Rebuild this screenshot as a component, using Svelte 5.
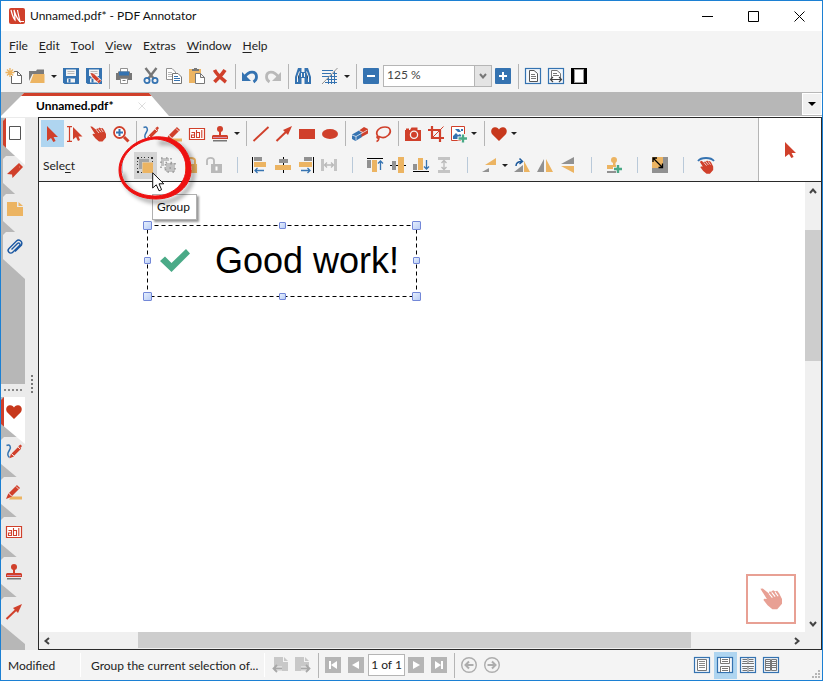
<script>
	const R = '#d0402b', B = '#3573b1', O = '#ecb462', G = '#919191', L = '#b9b9b9';

	const hand = (c, gap) => `<path fill="${c}" d="M.3.6L2 .4 6.500 4 6.800 2.600 8.200 2.800 9.500 1.600 11 2.600 12.500 2 14 4 16 8V11.500L12.500 15.500H9L5.500 12.500 2.500 8.800 3 7.800 5 8z"/><path stroke="${gap}" stroke-width=".8" fill="none" d="M6.500 4L9 7M8.500 3.200L11 6.300M11 3L13.200 6"/>`;
	const viewBox = `<rect x=".5" y=".5" width="15" height="15" fill="#f4f8fc" stroke="${B}" stroke-width="1.200"/>`;
	const heart = '<path fill="#c7381c" d="M8 15L1.200 8.200C-.8 5.500.3 1.500 3.800 1.200 6 1 7.400 2.300 8 3.500 8.600 2.300 10 1 12.200 1.200 15.700 1.500 16.800 5.500 14.800 8.200z"/>';
	const diskette = `<path fill="${B}" d="M0 0H16V16H1.500L0 14.500z"/><path fill="#f4f4f4" d="M3 1.500H13V8H3zM4 10.500H12V14.500H4z"/><path stroke="${L}" d="M4.500 3.500H11.500M4.500 5.500H11.500"/><path fill="${B}" d="M5.500 11H7.500V14.500H5.500z"/>`;
	const navBox = '<path fill="#b5b5b5" d="M0 0H16V16H0z"/>';
	const circle = '<circle cx="8" cy="8" r="7.300" stroke-width="1.400"/>';

	const icons = {
		logo: `<rect width="16" height="16" rx="2" fill="${R}"/><path fill="none" stroke="#fff" stroke-width="1.200" d="M2 2C3 6 4 10 6 12 6 8 5.500 5 5 2 6.500 7 8 11 11 13.500 10 9 9 5 8.500 2M10 13.500H15"/>`,
		newdoc: `<path fill="#fff" stroke="#666" d="M5.500 3.500H11.500L15.500 7.500V15.500H5.500z"/><path fill="none" stroke="#666" d="M11.500 3.500V7.500H15.500"/><path fill="#f4f4f4" d="M3 2H8V8H3z"/><path stroke="${O}" stroke-width="1.300" d="M4 0V9M-.5 4.500H8.500M1 1.500L7 7.500M7 1.500L1 7.500"/>`,
		open: `<path fill="#7b7b7b" d="M0 3H7L8 1.500H15V6H3.500L0 13z"/><path fill="${O}" d="M4.500 6H15.500V15H1z"/>`,
		save: diskette,
		saveedit: diskette + `<path stroke="#f4f4f4" stroke-width="5" d="M6 6.500L14 14"/><path stroke="${R}" stroke-width="3.400" d="M7 7.500L14 14"/><path fill="${R}" d="M4.500 5L8.500 6 6 8.500z"/><path stroke="#fff" stroke-width=".8" d="M11 13.500L13.500 11"/>`,
		print: `<path fill="#fff" stroke="${G}" d="M4.500.5H11.500V5H4.500z"/><path fill="#777" d="M0 5H2V3.500H14V5H16V12H0z"/><path fill="${B}" d="M3 3.500H13V7.500H3z"/><path fill="#fff" stroke="${G}" d="M4.500 10.500H11.500V15.500H4.500z"/><path fill="#777" d="M6.500 12H9.500V13H6.500z"/>`,
		cut: `<path stroke="#777" stroke-width="2.400" d="M2.500 0L11 11M13.500 0L5 11"/><g fill="none" stroke="${B}" stroke-width="1.800"><circle cx="4" cy="12.500" r="2.600"/><circle cx="12" cy="12.500" r="2.600"/></g>`,
		copy: `<path fill="#fff" stroke="${G}" d="M.5.5H6L9.500 4V11.500H.5z"/><path stroke="${L}" d="M2 4.500H6M2 6.500H6M2 8.500H6"/><path fill="#fff" stroke="#777" d="M6.500 5.500H12L15.500 9V15.500H6.500z"/><path stroke="${B}" d="M8 8.500H12M8 10.500H14M8 12.500H14"/>`,
		paste: `<path fill="${O}" d="M0 1H12V15H0z"/><path fill="#777" d="M3 3V1H5V0H8V1H10V3z"/><path fill="#fff" stroke="#777" d="M6.500 5.500H11.500L15.500 9.500V15.500H6.500zM11.500 5.500V9.500H15.500"/>`,
		remove: `<path stroke="${R}" stroke-width="3.600" fill="none" d="M2.500 2C5 7 9 10 14 14M13 2C10 7 6 10 2.500 14"/>`,
		undo: `<path fill="none" stroke="${B}" stroke-width="2.800" d="M2.500 9.500C7 2 14.500 3 14.500 9 14.500 11 13 13 11.500 14"/><path fill="${B}" d="M0 4V13H9z"/>`,
		redo: `<path fill="none" stroke="${L}" stroke-width="2.800" d="M13.500 9.500C9 2 1.500 3 1.500 9 1.500 11 3 13 4.500 14"/><path fill="${L}" d="M16 4V13H7z"/>`,
		find: `<path fill="${B}" d="M3 0H6.500V4H9.500V0H13L16 9V16H9.500V10H6.500V16H0V9z"/><path stroke="#f4f4f4" d="M4.500 3.500L2.500 9V14M11.500 3.500L13.500 9V14M6.500 5V9M9.500 5V9"/>`,
		grid: `<path stroke="${B}" d="M0 2.500H11M0 5.500H9M0 8.500H7M5 11.500H15M3 14.500H15M12.500 3V16M9.500 6V16M6.500 9V16M8 8.500H15M11 5.500H15"/><path stroke="${G}" d="M0 16L15.500 0"/>`,
		minus: `<rect width="16" height="16" rx="1" fill="${B}"/><path fill="#fff" d="M4 7H12V9H4z"/>`,
		plus: `<rect width="16" height="16" rx="1" fill="${B}"/><path stroke="#fff" stroke-width="2" d="M4 8H12M8 4V12"/>`,
		fitpage: viewBox + '<path fill="#fff" stroke="#555" d="M4.500 2.500H9L12.500 5.500V13.500H4.500z"/><path stroke="#777" d="M6 6.500H10M6 8.500H11M6 10.500H11"/>',
		fitwidth: viewBox + '<path fill="#fff" stroke="#777" d="M3.500 12.500V2.500H9L12.500 5.500V12.500"/><path stroke="#777" d="M5 5.500H9M5 7.500H11"/><path stroke="#444" stroke-width="1.200" fill="none" d="M2.500 11.500H13.500M5 9L2.500 11.500 5 14M11 9L13.500 11.500 11 14"/>',
		fullscreen: '<path d="M0 0H16V16H0z"/><rect x="3.500" y="1.500" width="9" height="13" fill="#fff" stroke="#999"/>',
		cursor: `<path fill="${R}" d="M3 0L14 11H9.600L11.600 15L9.300 16L7 12L3 15z"/>`,
		textselect: `<path fill="none" stroke="${R}" stroke-width="1.200" d="M0 .6H5M0 15.400H5M2.500.6V15.400"/><path fill="${R}" d="M6 1L15.500 10.500H11.500L13 14 11 15 9 11 6 13.500z"/>`,
		hand: hand(R, '#f4f4f4'),
		handpale: hand('#e8a094', '#fff'),
		zoom: `<circle cx="6.500" cy="6.500" r="5.500" fill="#fff" stroke="${R}" stroke-width="1.800"/><path stroke="${R}" stroke-width="3" d="M11 11L15.500 15.500"/><path stroke="${B}" stroke-width="2" d="M3 6.500H10M6.500 3V10"/>`,
		pen: `<path fill="none" stroke="${B}" stroke-width="1.500" d="M.5 1.500C4 0 5.500 3 3.500 6 1.500 9 1 12 3.500 13.500"/><path stroke="${R}" stroke-width="3.200" d="M6.500 11L14 3.500"/><path fill="${R}" d="M12.500 2L14.500.5 16 2 14.500 4zM5 9.800L3.500 14.300 8 12.500z"/><path stroke="#fff" stroke-width=".8" d="M12 3L14 5M5.500 9.500L8 12"/>`,
		marker: `<path fill="${O}" d="M5 12.500H16V15.500H3z"/><path stroke="${R}" stroke-width="4.500" d="M4.500 10.500L12.500 2.500"/><path fill="${R}" d="M2.500 9L0 15 6.500 12.500z"/><path stroke="#fff" stroke-width=".8" d="M10 2.500L13 5.500M2.500 9L6 12.500"/>`,
		textbox: `<path fill="#fff" stroke="${R}" stroke-width="1.200" d="M.5 2.500H15.500V13.500H.5z"/><path fill="none" stroke="${R}" stroke-width="1.100" d="M2.500 6.500H5.500V11.500H2.500V9H5.500M7.500 4V11.500H10.500V6.500H7.500M12.800 4V12"/>`,
		stamp: `<circle cx="8" cy="3" r="3" fill="${R}"/><path fill="${R}" d="M7 5H9V9H15L16 10V13H0V10L1 9H7z"/><path fill="#d98aa8" d="M1 11H15V12H1z"/><path fill="#777" d="M1 14H15V15.500H1z"/>`,
		line: `<path stroke="${R}" stroke-width="1.800" d="M.5 15L15.500 1"/>`,
		arrow: `<path stroke="${R}" stroke-width="2" d="M.5 15L12 4"/><path fill="${R}" d="M16 0L7 4 12 9z"/>`,
		rect: `<path fill="${R}" d="M0 3H16V13H0z"/>`,
		ellipse: `<ellipse cx="8" cy="8" rx="8" ry="5" fill="${R}"/>`,
		eraser: `<path fill="${B}" d="M0 8.500L7 4.500 10 6.500V11L3.500 15 0 13z"/><path fill="${R}" d="M7 4.500L12 1 16 3V7.500L9.500 11V6.500z"/><path fill="none" stroke="#e6eef6" stroke-width=".8" d="M0 9L4 10.500V14.500M4 10.500L15.500 4M7 4.500L11 6.500"/>`,
		lasso: `<path fill="none" stroke="${R}" stroke-width="1.700" d="M3 10.500C-.5 6 4 1 10 1 16 1 16.500 6 13.500 9 11 11.500 7 12 4 10.500 2 9.500 1 12 3.500 12.500M3.500 11C4.500 13 3 15 1.500 15.500"/>`,
		camera: `<path fill="${R}" d="M0 4H1V2.500H4V4H5L6.500 1.500H12.500V4H16V15H0z"/><circle cx="9" cy="8.800" r="3.600" fill="none" stroke="#f4f4f4" stroke-width="1.300"/>`,
		crop: `<path fill="none" stroke="${R}" stroke-width="2.200" d="M0 4H12V16M4 0V12H16"/><path stroke="${R}" d="M4 12L15.500.5"/>`,
		image: `<path fill="#fff" stroke="${R}" d="M.5.5H13.500V14.500H.5z"/><path fill="${B}" d="M2 13V10L5 7 7 9 9 8 12 11V13zM4 3H8L10 6H7zM10 3H12V5H10z"/><path stroke="#fff" stroke-width="4" d="M6.500 12.500H16M12 8V16"/><path stroke="#4aa986" stroke-width="2.400" d="M7.500 12.500H16M12 8.500V16.500"/>`,
		heart,
		group: `<path fill="#a4a4a4" d="M2 2H12V5H5V12H2z"/><path fill="${O}" d="M5.500 5.500H16V16H5.500z"/><path fill="#333" d="M0 0H2V2H0zM4 0H5V1H4zM7 0H8V1H7zM11 0H12V1H11zM14 0H16V2H14zM0 4H1V5H0zM0 7H1V8H0zM0 11H1V12H0zM0 14H2V16H0zM15 4H16V5H15zM4 15H5V16H4z"/>`,
		ungroup: '<path fill="#c2c2c2" d="M1 1H9V4H4V9H1zM6 6H15V15H6z"/><path stroke="#999" stroke-width="1.600" stroke-dasharray="1.600 3.400" fill="none" d="M1 1H11V11H1zM5.500 5.500H15V15H5.500z"/>',
		lock: `<rect x="2" y="7" width="12" height="9" fill="${O}"/><path fill="none" stroke="${O}" stroke-width="2" d="M4 7V3.500C4 0 12 0 12 3.500V7"/><path fill="#fff" d="M7 9.500H9V13H7z"/>`,
		unlock: `<rect x="5" y="7" width="11" height="9" fill="${L}"/><path fill="none" stroke="${L}" stroke-width="1.800" d="M1 8V3.500C1 0 8 0 8 3.500V7"/><path fill="#fff" d="M9.500 9.500H11.500V13.500H9.500z"/>`,
		alignleft: `<path d="M0 0H1V16H0z"/><path fill="${G}" d="M2 0H10V4H2z"/><path fill="${O}" d="M2 5H14V10H2z"/><path fill="none" stroke="${B}" stroke-width="1.300" d="M12 13.500H3M5.500 11L3 13.500 5.500 16"/>`,
		aligncenter: `<path d="M8 0H9V16H8z"/><path fill="${G}" d="M4 2H13V6H4z"/><path fill="${O}" d="M0 8H16V13H0z"/>`,
		alignright: `<path d="M15 0H16V16H15z"/><path fill="${G}" d="M6 0H14V4H6z"/><path fill="${O}" d="M1 5H14V10H1z"/><path fill="none" stroke="${B}" stroke-width="1.300" d="M3 13.500H12M9.500 11L12 13.500 9.500 16"/>`,
		spaceh: `<path fill="#c4c4c4" d="M0 2H3V14H0zM13 2H16V14H13z"/><path fill="none" stroke="${L}" stroke-width="1.300" d="M3.500 8H12.500M6 5.500L3.500 8 6 10.500M10 5.500L12.500 8 10 10.500"/>`,
		aligntop: `<path d="M0 1H16V2H0z"/><path fill="${G}" d="M0 3H4V11H0z"/><path fill="${O}" d="M5 3H10V15H5z"/><path fill="none" stroke="${B}" stroke-width="1.300" d="M13.500 13V4M11 6.500L13.500 4 16 6.500"/>`,
		alignmiddle: `<path d="M0 8H16V9H0z"/><path fill="${G}" d="M2 4H6V13H2z"/><path fill="${O}" d="M8 0H14V16H8z"/>`,
		alignbottom: `<path d="M0 14H16V15H0z"/><path fill="${G}" d="M0 7H4V13H0z"/><path fill="${O}" d="M5 1H10V13H5z"/><path fill="none" stroke="${B}" stroke-width="1.300" d="M13.500 3V12M11 9.500L13.500 12 16 9.500"/>`,
		spacev: `<path fill="#c4c4c4" d="M2 0H14V3H2zM2 13H14V16H2z"/><path fill="none" stroke="${L}" stroke-width="1.300" d="M8 3.500V12.500M5.500 6L8 3.500 10.500 6M5.500 10L8 12.500 10.500 10"/>`,
		rotate: `<path fill="${O}" d="M3 8L14 1V8z"/><path fill="${G}" d="M0 15L7 11V15z"/>`,
		rotateright: `<path fill="${G}" d="M0 15L9 8V15z"/><path fill="${O}" d="M10 4L16 15H10z"/><path fill="none" stroke="#1d5a9c" stroke-width="1.500" d="M2 9C2 6 4 4.500 8 4.500M5.500 1.500L8.500 4.500 5.500 7"/>`,
		fliph: `<path fill="${G}" d="M7 2V15H0z"/><path fill="${O}" d="M9 2V15H16z"/>`,
		flipv: `<path fill="${G}" d="M14 0V7H1z"/><path fill="${O}" d="M14 16V9H1z"/>`,
		addstamp: `<circle cx="8" cy="3" r="3" fill="${O}"/><path fill="${O}" d="M7 5H9.500V8H14V12H1V8H7z"/><path fill="${G}" d="M1 14H12V16H1z"/><path stroke="#f4f4f4" stroke-width="4" d="M7 12H16M12 7V16"/><path stroke="#4aa986" stroke-width="2.400" d="M8 12H16M12 8V16"/>`,
		resize: `<path fill="${G}" d="M0 0H16V16H0z"/><path fill="${O}" d="M0 0H11V11H0z"/><path fill="none" stroke="#000" stroke-width="1.300" d="M1 1L10.500 10.500M1 5V1H5M6.500 10.500H10.500V6.500"/>`,
		touch: `<g transform="translate(0 2)scale(.95)">${hand(R, '#f4f4f4')}</g><path fill="none" stroke="#f4f4f4" stroke-width="4" d="M0 4C3-.5 13-.5 16 4"/><path fill="none" stroke="${B}" stroke-width="1.800" d="M0 4C3 0 13 0 16 4"/>`,
		page: '<path fill="#fff" stroke="#555" d="M2.500 1.500H13.500V14.500H2.500z"/>',
		bookmark: `<path fill="${R}" d="M12 0L16 4 5.500 15 5 11.500 0 11z"/><path fill="#f0b0a0" d="M12 4L13 3 12.500 5z"/>`,
		note: `<path fill="${O}" d="M0 1H10V6H16V15H0z"/><path fill="${O}" d="M11.500 1L16 5H11.500z"/>`,
		clip: '<path fill="none" stroke="#1b58a2" stroke-width="1.400" d="M4.500 10.500L10.500 4.500C12 3 14 5 12.500 6.500L6 13C3 16-.5 12 2 9.500L9.500 2C12-.5 16 2.500 14.500 6L8 12.500"/>',
		pageback: '<path fill="#c8c8c8" d="M2 0H11V5H16V14H2z"/><path fill="#c8c8c8" d="M12 0L16 4H12z"/><path fill="none" stroke="#f4f4f4" stroke-width="4" d="M10 11.500H1"/><path fill="none" stroke="#a8a8a8" stroke-width="1.800" d="M10 11.500H1.500M5 8L1.500 11.500 5 15"/>',
		pagenext: '<path fill="#c8c8c8" d="M0 0H9V5H14V14H0z"/><path fill="#c8c8c8" d="M10 0L14 4H10z"/><path fill="none" stroke="#f4f4f4" stroke-width="4" d="M6 11.500H15"/><path fill="none" stroke="#a8a8a8" stroke-width="1.800" d="M6 11.500H14.500M11 8L14.500 11.500 11 15"/>',
		first: navBox + '<path fill="#fff" d="M4 4H6V12H4zM12 4V12L6 8z"/>',
		prev: navBox + '<path fill="#fff" d="M11 4V12L4 8z"/>',
		next: navBox + '<path fill="#fff" d="M5 4V12L12 8z"/>',
		last: navBox + '<path fill="#fff" d="M10 4H12V12H10zM4 4V12L10 8z"/>',
		back: `<g fill="none" stroke="#adadad">${circle}<path stroke-width="2" d="M12.500 8H4.500M8 4.500L4.500 8 8 11.500"/></g>`,
		forward: `<g fill="none" stroke="#adadad">${circle}<path stroke-width="2" d="M3.500 8H11.500M8 4.500L11.500 8 8 11.500"/></g>`,
		single: viewBox + '<path fill="#fff" stroke="#777" d="M3.500 2.500H12.500V13.500H3.500z"/><path stroke="#888" d="M5 4.500H11M5 6.500H11M5 8.500H11M5 10.500H11"/>',
		continuous: viewBox + '<path fill="#fff" stroke="#777" d="M3.500 1V6.500H12.500V1M3.500 15V9.500H12.500V15"/><path stroke="#777" d="M5 2.500H11M5 4.500H11M5 11.500H11M5 13.500H11"/>',
		double: viewBox + '<path fill="none" stroke="#777" d="M2 6.500H14M2 9.500H14M8 1V6.500M8 9.500V15M2.500 2.500H7M9 2.500H13.500M2.500 4.500H7M9 4.500H13.500M2.500 11.500H7M9 11.500H13.500M2.500 13.500H7M9 13.500H13.500"/>',
		book: viewBox + '<path fill="none" stroke="#777" d="M2.500 2.500H7.500V13.500H2.500zM8.500 2.500H13.500V13.500H8.500zM3 4.500H7M3 6.500H7M3 8.500H7M3 10.500H7M9 4.500H13M9 6.500H13M9 8.500H13M9 10.500H13"/>'
	};

	const menu = [['F', 'ile'], ['E', 'dit'], ['T', 'ool'], ['V', 'iew'], ['E', 'xtras'], ['W', 'indow'], ['H', 'elp']];

	// '|' is a separator, 'v' a drop-down arrow, '<' one that sits close to its icon
	const fileTools = ['newdoc', 'open', 'v', 'save', 'saveedit', '|', 'print', ' ', 'cut', 'copy', 'paste', 'remove', '|', 'undo', 'redo', '|', 'find', ' ', 'grid', 'v', '|', 'minus'];
	const viewTools = ['plus', '|', 'fitpage', 'fitwidth', 'fullscreen'];
	const drawTools = ['cursor', 'textselect', 'hand', 'zoom', '|', 'pen', 'marker', 'textbox', 'stamp', 'v', '|', 'line', 'arrow', 'rect', 'ellipse', '|', 'eraser', 'lasso', '|', 'camera', 'crop', 'image', '<', '|', 'heart', '<'];
	const selectTools = ['|', 'group', 'ungroup', 'lock', 'unlock', '|', 'alignleft', 'aligncenter', 'alignright', 'spaceh', '|', 'aligntop', 'alignmiddle', 'alignbottom', 'spacev', '|', 'rotate', '<', 'rotateright', 'fliph', 'flipv', '|', 'addstamp', '|', 'resize', '|', 'touch'];
	const panels = ['page', 'bookmark', 'note', 'clip'];
	const favorites = ['heart', 'pen', 'marker', 'textbox', 'stamp', 'arrow'];
	const views = ['single', 'continuous', 'double', 'book'];
	const handles = ['nw', 'n', 'ne', 'w', 'e', 'sw', 's', 'se'];

	let tool = $state('cursor');
	let view = $state('continuous');
	let panel = $state('page');
	let favorite = $state('heart');
	let pageNumber = $state('1 of 1');
</script>

{#snippet icon(name)}
	<svg class="icon" viewBox="0 0 16 16" aria-hidden="true">{@html icons[name]}</svg>
{/snippet}

{#snippet tools(list, active, pick)}
	{#each list as item}
		{#if item === '|'}
			<span class="sep"></span>
		{:else if item === ' '}
			<span class="space"></span>
		{:else if item === 'v' || item === '<'}
			<button class="drop" class:tight={item === '<'} aria-label="More"><i class="caret"></i></button>
		{:else}
			<button class="tool" class:active={item === active} aria-label={item} onclick={() => pick?.(item)}>
				{@render icon(item)}
			</button>
		{/if}
	{/each}
{/snippet}

<div class="window">
	<header class="title">
		{@render icon('logo')}
		<h1>Unnamed.pdf* - PDF Annotator</h1>
		<div class="controls">
			<button aria-label="Minimize"><svg viewBox="0 0 11 11"><path d="M0 5.500H11" /></svg></button>
			<button aria-label="Maximize"><svg viewBox="0 0 11 11"><path d="M.5.5H10.500V10.500H.5z" /></svg></button>
			<button aria-label="Close"><svg viewBox="0 0 11 11"><path d="M.5.5L10.500 10.500M10.500.5L.5 10.500" /></svg></button>
		</div>
	</header>

	<nav class="menu">
		{#each menu as [key, rest], i}
			{#if i === 4}
				<button>E<u>x</u>tras</button>
			{:else}
				<button><u>{key}</u>{rest}</button>
			{/if}
		{/each}
	</nav>

	<div class="bar main-bar">
		{@render tools(fileTools)}
		<div class="combo">
			<select aria-label="Zoom"><option>125 %</option></select>
			<svg viewBox="0 0 8 6"><path d="M1 1L4 4.500 7 1" /></svg>
		</div>
		{@render tools(viewTools)}
	</div>

	<div class="tabs">
		<div class="tab">
			<span>Unnamed.pdf*</span>
			<button aria-label="Close tab"><svg viewBox="0 0 8 8"><path d="M.5.5L7.500 7.500M7.500.5L.5 7.500" /></svg></button>
		</div>
		<button class="tab-list" aria-label="Tabs"><i class="caret"></i></button>
	</div>

	<div class="body">
		<aside>
			<div class="side panels">
				{#each panels as name}
					<button class:active={name === panel} aria-label={name} onclick={() => (panel = name)}>{@render icon(name)}</button>
				{/each}
			</div>
			<div class="split"></div>
			<div class="side favorites">
				{#each favorites as name}
					<button class:active={name === favorite} aria-label={name} onclick={() => (favorite = name)}>{@render icon(name)}</button>
				{/each}
			</div>
			<div class="grip"></div>
		</aside>

		<main>
			<div class="toolbox">
				<div class="rows">
					<div class="bar draw-bar">
						{@render tools(drawTools, tool, (t) => (tool = t))}
					</div>
					<div class="bar select-bar">
						<span class="mode">Sele<u>c</u>t</span>
						{@render tools(selectTools, 'group')}
					</div>
				</div>
				<div class="preview">{@render icon('cursor')}</div>

				<svg class="ring" viewBox="0 0 80 70" aria-hidden="true">
					<path class="ring-shadow" d="M41 8C62 6 74 17 75 35 76 53 62 67 43 67 23 67 6 55 5 38" />
					<path class="ring-line" fill-rule="evenodd" d="M36 2C57 0 72 13 73 33 74 51 58 64 38 64 18 64 1 53 1 35 1 18 17 4 36 2zM36 4C19 6 3 18 3 35 3 50 18 61 37 61 54 61 68 49 68 33 68 17 55 4 36 4z" />
				</svg>
				<svg class="pointer" viewBox="0 0 13 20" aria-hidden="true">
					<path d="M.7.800V16L4.300 12.800 7 18.800 9.600 17.700 7 11.800H11.800z" />
				</svg>
				<div class="tooltip" role="tooltip">Group</div>
			</div>

			<div class="view">
				<div class="canvas">
					<div class="selection">
						<svg class="outline" aria-hidden="true"><rect x=".5" y=".5" width="100%" height="100%" /></svg>
						<svg class="check" viewBox="0 0 30 23"><path d="M0 12L5 7.500 11.500 14 26 0 30 4.500 11.500 23z" /></svg>
						<span>Good work!</span>
						{#each handles as h}
							<i class="handle {h}"></i>
						{/each}
					</div>
					<button class="pan" aria-label="Pan">{@render icon('handpale')}</button>
				</div>
				<div class="scroll vertical">
					<button aria-label="Scroll up"><svg viewBox="0 0 8 6"><path d="M1 5L4 1.500 7 5" /></svg></button>
					<div class="track"><div class="thumb"></div></div>
					<button aria-label="Scroll down"><svg viewBox="0 0 8 6"><path d="M1 1L4 4.500 7 1" /></svg></button>
				</div>
				<div class="scroll horizontal">
					<button aria-label="Scroll left"><svg viewBox="0 0 6 8"><path d="M5 1L1.500 4 5 7" /></svg></button>
					<div class="track"><div class="thumb"></div></div>
					<button aria-label="Scroll right"><svg viewBox="0 0 6 8"><path d="M1 1L4.500 4 1 7" /></svg></button>
				</div>
			</div>
		</main>
	</div>

	<footer>
		<span class="state">Modified</span>
		<span class="hint">Group the current selection of...</span>
		<div class="bar nav-bar">
			{@render tools(['pageback', 'pagenext', '|', 'first', 'prev'])}
			<input aria-label="Page" bind:value={pageNumber} />
			{@render tools(['next', 'last', '|', 'back', 'forward'])}
		</div>
		<div class="bar view-bar">
			{@render tools(views, view, (v) => (view = v))}
		</div>
		<svg class="resizer" viewBox="0 0 8 8" aria-hidden="true">
			<path d="M6 0H8V2H6zM3 3H5V5H3zM6 3H8V5H6zM0 6H2V8H0zM3 6H5V8H3zM6 6H8V8H6z" />
		</svg>
	</footer>
</div>

<style>
	:global(body) {
		margin: 0;
	}
	.window {
		display: flex;
		flex-direction: column;
		box-sizing: border-box;
		min-height: 100vh;
		border: 1px solid #1c80d3;
		background: #f4f4f4;
		color: #222;
		font: 12px/16px Lato, "Open Sans", sans-serif;
	}
	button {
		display: flex;
		align-items: center;
		justify-content: center;
		flex: none;
		margin: 0;
		padding: 0;
		border: 0;
		background: none;
		color: inherit;
		font: inherit;
	}
	.icon {
		display: block;
		flex: none;
		width: 16px;
		height: 16px;
		overflow: visible;
	}
	u {
		text-underline-offset: 2px;
	}

	/* title and menu */
	.title {
		display: flex;
		align-items: center;
		gap: 5px;
		height: 30px;
		padding-left: 8px;
		background: #fff;
	}
	h1 {
		flex: 1;
		margin: 0;
		font: inherit;
		color: #111;
	}
	.controls {
		display: flex;
	}
	.controls button {
		width: 46px;
		height: 29px;
	}
	.controls svg {
		width: 11px;
		height: 11px;
		fill: none;
		stroke: #000;
	}
	.menu {
		display: flex;
		gap: 11px;
		height: 30px;
		padding-left: 8px;
	}

	/* toolbars */
	.bar {
		display: flex;
		align-items: center;
	}
	.main-bar {
		height: 30px;
		padding: 0 0 1px 2px;
	}
	.tool {
		justify-content: flex-start;
		width: 23px;
		height: 27px;
		padding-left: 3px;
	}
	.tool.active {
		background: #afd5f0;
	}
	.sep {
		flex: none;
		width: 1px;
		height: 25px;
		margin: 0 3px;
		background: #b5b5b5;
	}
	.space {
		width: 4px;
	}
	.drop {
		justify-content: flex-start;
		width: 11px;
		height: 27px;
		padding-left: 2px;
	}
	.drop.tight {
		width: 10px;
		padding-left: 0;
	}
	.caret {
		border: 3px solid transparent;
		border-top-color: #222;
		border-bottom: 0;
	}
	.combo {
		position: relative;
		width: 109px;
	}
	.combo select {
		appearance: none;
		display: block;
		box-sizing: border-box;
		width: 100%;
		height: 22px;
		padding: 0 20px 2px 3px;
		border: 1px solid #b5b5b5;
		border-radius: 0;
		background: linear-gradient(to left, #e4e4e4 16px, #b5b5b5 16px, #b5b5b5 17px, #fff 17px);
		color: #444;
		font: inherit;
	}
	.combo svg {
		position: absolute;
		top: 8px;
		right: 5px;
		width: 8px;
		height: 6px;
		fill: none;
		stroke: #777;
		stroke-width: 2;
		pointer-events: none;
	}

	/* document tabs */
	.tabs {
		display: flex;
		justify-content: space-between;
		align-items: flex-end;
		height: 24px;
		border-bottom: 1px solid #fff;
		background: #b7b7b7;
	}
	.tab {
		display: flex;
		align-items: center;
		justify-content: space-between;
		box-sizing: border-box;
		width: 168px;
		height: 23px;
		padding: 0 23px 0 35px;
		border-top: 3px solid #d0402b;
		background: #fff;
		clip-path: polygon(0 100%, 23px 0, 148px 0, 100% 100%);
		color: #000;
		font-weight: 700;
	}
	.tab svg {
		width: 8px;
		height: 8px;
		stroke: #ddd;
	}
	.tab-list {
		box-sizing: border-box;
		width: 20px;
		height: 22px;
		margin-bottom: 1px;
		border: 1px solid #fff;
		background: #f0f0f0;
	}
	.tab-list .caret {
		border-width: 4px;
		border-top-color: #000;
		border-bottom: 0;
	}

	/* side panels */
	.body {
		display: flex;
		flex: 1;
	}
	aside {
		position: relative;
		display: flex;
		flex-direction: column;
		width: 37px;
		padding-top: 1px;
		background: #ebebeb;
	}
	.side {
		width: 24px;
		background: #b7b7b7;
	}
	.panels {
		flex: 1;
	}
	.side button {
		position: relative;
		align-items: flex-start;
		justify-content: flex-start;
		box-sizing: border-box;
		width: 100%;
		height: 38px;
		padding: 7px 0 0 6px;
	}
	.favorites button {
		height: 40px;
		padding-left: 5px;
	}
	.favorites button:last-child {
		height: 53px;
	}
	.side button::before {
		content: "";
		position: absolute;
		top: 0;
		left: 2px;
		right: 0;
		height: 47px;
		background: #ebebeb;
		clip-path: polygon(3px 0, 100% 0, 100% 100%, 0 27px, 0 3px);
	}
	.favorites button::before {
		left: 0;
	}
	.side .active {
		z-index: 1;
	}
	.side .active::before {
		background: linear-gradient(to right, #d0402b 3px, #fff 3px);
	}
	.side .icon {
		position: relative;
	}
	.split {
		width: 18px;
		height: 2px;
		margin: 5px 0 6px 3px;
		background: repeating-linear-gradient(to right, #888 0 2px, transparent 2px 4px);
	}
	.grip {
		position: absolute;
		right: 5px;
		bottom: 257px;
		width: 2px;
		height: 18px;
		background: repeating-linear-gradient(#777 0 2px, transparent 2px 4px);
	}

	main {
		display: flex;
		flex: 1;
		flex-direction: column;
		min-width: 0;
		border: 1px solid #2a2a2a;
	}
	.toolbox {
		position: relative;
		display: flex;
		border-bottom: 1px solid #2a2a2a;
	}
	.rows {
		flex: 1;
	}
	.draw-bar {
		height: 31px;
		padding-left: 2px;
	}
	.select-bar {
		height: 32px;
	}
	.select-bar .sep {
		height: 16px;
		margin: 0 11px;
		background: #b9c9d9;
	}
	.select-bar .drop {
		width: 9px;
	}
	.select-bar .active {
		background: #d4d4d4;
	}
	.mode {
		box-sizing: border-box;
		width: 72px;
		padding: 2px 0 0 4px;
	}
	.preview {
		display: flex;
		align-items: center;
		justify-content: center;
		width: 62px;
		border-left: 1px solid #b5b5b5;
		background: #fff;
	}
	.ring {
		position: absolute;
		top: 17px;
		left: 79px;
		z-index: 3;
		width: 80px;
		height: 70px;
		overflow: visible;
		pointer-events: none;
	}
	.ring-line {
		fill: #ee1111;
		stroke: #ee1111;
	}
	.ring-shadow {
		fill: none;
		stroke: #000;
		stroke-width: 4;
		opacity: 0.35;
		filter: blur(2px);
	}
	.pointer {
		position: absolute;
		top: 54px;
		left: 113px;
		z-index: 4;
		width: 13px;
		height: 20px;
		pointer-events: none;
	}
	.pointer path {
		fill: #fff;
		stroke: #111;
	}
	.tooltip {
		position: absolute;
		top: 76px;
		left: 113px;
		z-index: 2;
		padding: 4px 6px 4px 4px;
		border: 1px solid #b0b0b0;
		background: #fff;
		box-shadow: 2px 2px 2px #999;
		color: #111;
	}

	/* page area */
	.view {
		display: grid;
		flex: 1;
		grid-template: 1fr 17px / 1fr 16px;
		background: #f0f0f0;
	}
	.canvas {
		position: relative;
		background: #fff;
	}
	.selection {
		position: absolute;
		top: 43px;
		left: 108px;
		display: flex;
		align-items: center;
		gap: 25px;
		box-sizing: border-box;
		width: 269px;
		height: 71px;
		padding-left: 13px;
		color: #000;
		font: 36px/44px "Liberation Sans", Arial, sans-serif;
		white-space: nowrap;
	}
	.outline {
		position: absolute;
		inset: 0;
		width: 100%;
		height: 100%;
		overflow: visible;
		fill: none;
		stroke: #000;
		stroke-dasharray: 4 3;
	}
	.check {
		flex: none;
		width: 30px;
		height: 23px;
		fill: #4aaa87;
	}
	.handle {
		position: absolute;
		box-sizing: border-box;
		width: 9px;
		height: 9px;
		margin: -4px 0 0 -4px;
		border: 1px solid #7388d8;
		border-radius: 1px;
		background: linear-gradient(135deg, #e6effd, #b9cdf5);
	}
	.n, .s, .w, .e {
		width: 7px;
		height: 7px;
		margin: -3px 0 0 -3px;
	}
	.nw, .n, .ne {
		top: 0;
	}
	.w, .e {
		top: 49%;
	}
	.sw, .s, .se {
		top: 100%;
	}
	.nw, .w, .sw {
		left: 0;
	}
	.n, .s {
		left: 50%;
	}
	.ne, .e, .se {
		left: 100%;
	}
	.pan {
		position: absolute;
		right: 9px;
		bottom: 8px;
		box-sizing: border-box;
		width: 50px;
		height: 50px;
		border: 2px solid #e8a094;
		background: #fff;
	}
	.pan .icon {
		width: 24px;
		height: 22px;
	}
	.scroll {
		display: flex;
	}
	.vertical {
		flex-direction: column;
	}
	.scroll button {
		width: 16px;
		height: 17px;
	}
	.scroll svg {
		width: 8px;
		height: 8px;
		fill: none;
		stroke: #444;
		stroke-width: 2;
	}
	.track {
		display: flex;
		flex: 1;
	}
	.vertical .track {
		flex-direction: column;
		padding-top: 31px;
	}
	.horizontal .track {
		padding-left: 83px;
	}
	.thumb {
		background: #cdcdcd;
	}
	.vertical .thumb {
		height: 34%;
	}
	.horizontal .thumb {
		width: 85%;
		height: 16px;
	}

	/* status bar */
	footer {
		display: flex;
		align-items: center;
		height: 30px;
	}
	.state, .hint {
		box-sizing: border-box;
		padding: 5px 0 3px 7px;
		border-right: 1px solid #fff;
	}
	.state {
		width: 80px;
	}
	.hint {
		width: 184px;
		padding-left: 10px;
		white-space: nowrap;
	}
	.nav-bar {
		margin-left: 4px;
	}
	input {
		box-sizing: border-box;
		width: 37px;
		height: 22px;
		padding: 0 0 1px;
		border: 1px solid #b5b5b5;
		background: #fff;
		color: #222;
		font: inherit;
		text-align: center;
	}
	.view-bar {
		margin-left: auto;
	}
	.resizer {
		align-self: flex-end;
		width: 8px;
		height: 8px;
		margin: 0 2px 2px 29px;
		fill: #b5b5b5;
	}
</style>
